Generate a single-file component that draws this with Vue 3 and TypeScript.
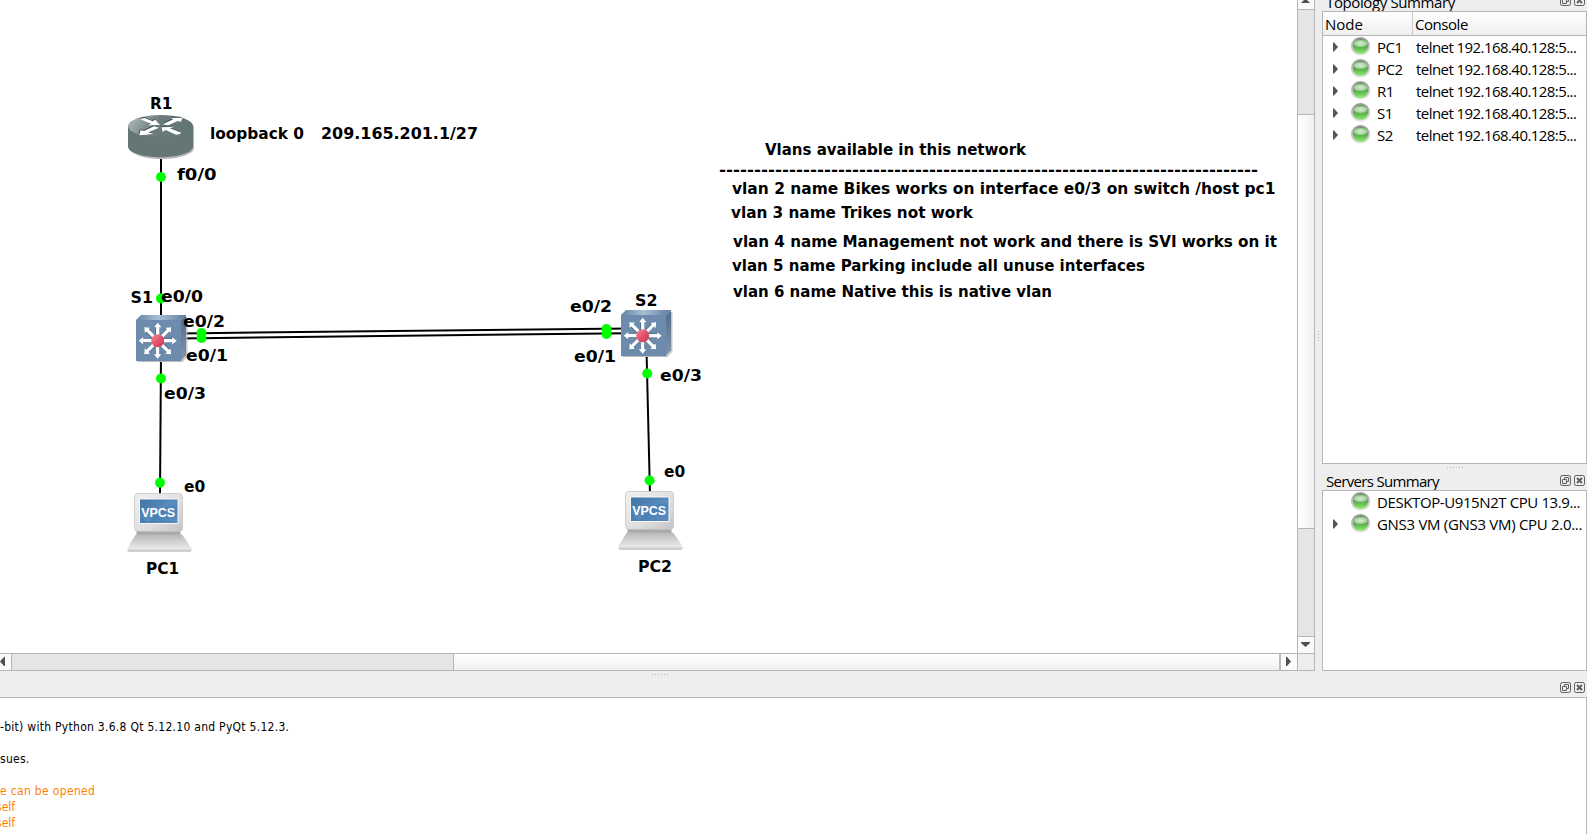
<script setup lang="ts">
interface Label { text: string; x: number; y: number; w: number }
interface Point { x: number; y: number }

const labels: Label[] = [
  { text: 'R1', x: 150, y: 108.6, w: 22.5 },
  { text: 'loopback 0', x: 210, y: 138.6, w: 94 },
  { text: '209.165.201.1/27', x: 321, y: 138.6, w: 157 },
  { text: 'f0/0', x: 177, y: 179.6, w: 39.5 },
  { text: 'S1', x: 130.5, y: 303.4, w: 22.5 },
  { text: 'e0/0', x: 161, y: 301.8, w: 42 },
  { text: 'e0/2', x: 183, y: 326.6, w: 42 },
  { text: 'e0/1', x: 186, y: 360.8, w: 42 },
  { text: 'e0/3', x: 164, y: 398.6, w: 42 },
  { text: 'e0/2', x: 570, y: 311.8, w: 42 },
  { text: 'S2', x: 635, y: 305.6, w: 22.5 },
  { text: 'e0/1', x: 574, y: 361.8, w: 42 },
  { text: 'e0/3', x: 660, y: 380.6, w: 42 },
  { text: 'e0', x: 184, y: 491.6, w: 21.2 },
  { text: 'e0', x: 664, y: 476.6, w: 21.2 },
  { text: 'PC1', x: 146, y: 573.6, w: 33 },
  { text: 'PC2', x: 638, y: 571.6, w: 34 },
  { text: 'Vlans available in this network', x: 765, y: 154.5, w: 261 },
  { text: '-'.repeat(77), x: 719, y: 174.5, w: 539 },
  { text: 'vlan 2 name Bikes works on interface e0/3 on switch /host pc1', x: 732, y: 193.6, w: 543.5 },
  { text: 'vlan 3 name Trikes not work', x: 731, y: 217.6, w: 242 },
  { text: 'vlan 4 name Management not work and there is SVI works on it', x: 733, y: 246.6, w: 544 },
  { text: 'vlan 5 name Parking include all unuse interfaces', x: 732, y: 270.6, w: 413 },
  { text: 'vlan 6 name Native this is native vlan', x: 733, y: 296.6, w: 319 },
]

const ports: Point[] = [
  { x: 161, y: 177 }, { x: 161, y: 298.5 }, { x: 161, y: 378.5 }, { x: 160, y: 482.8 },
  { x: 201.5, y: 333 }, { x: 201.5, y: 338 }, { x: 606.5, y: 329 }, { x: 606.5, y: 334 },
  { x: 647.2, y: 373.5 }, { x: 649.6, y: 480.5 },
]

const switches: Point[] = [{ x: 136, y: 315 }, { x: 621, y: 310 }]
const hosts: Point[] = [{ x: 127, y: 493 }, { x: 618, y: 491 }]
const spokes = [
  { a: 0, l: 19 }, { a: 45, l: 19 }, { a: 90, l: 18 }, { a: 135, l: 19 },
  { a: 180, l: 19 }, { a: 225, l: 19 }, { a: 270, l: 18 }, { a: 315, l: 19 },
]

const nodes = ['PC1', 'PC2', 'R1', 'S1', 'S2']
const servers = [
  { text: 'DESKTOP-U915N2T CPU 13.9...', open: false, cls: 'desk' },
  { text: 'GNS3 VM (GNS3 VM) CPU 2.0...', open: true, cls: 'vm' },
]
</script>

<template>
  <div class="app">
    <div class="upper">
      <div class="view">
        <svg class="scene" width="1297" height="653" viewBox="0 0 1297 653">
          <defs>
            <linearGradient id="rt" x1="0" y1="0" x2="1" y2="0.2">
              <stop offset="0" stop-color="#b4bebe" /><stop offset=".5" stop-color="#6c7c7c" /><stop offset="1" stop-color="#627474" />
            </linearGradient>
            <linearGradient id="st" x1="0" y1="0" x2="1" y2="0">
              <stop offset="0" stop-color="#6583a5" /><stop offset=".45" stop-color="#a9bed6" /><stop offset="1" stop-color="#5f7c9f" />
            </linearGradient>
            <linearGradient id="ss" x1="0" y1="0" x2="0" y2="1">
              <stop offset="0" stop-color="#516b8a" /><stop offset="1" stop-color="#8496ab" />
            </linearGradient>
            <linearGradient id="red" x1="0" y1="0" x2="1" y2="1">
              <stop offset="0" stop-color="#f58a97" /><stop offset=".6" stop-color="#e04a64" /><stop offset="1" stop-color="#c83852" />
            </linearGradient>
            <linearGradient id="case" x1="0" y1="0" x2="1" y2="1">
              <stop offset="0" stop-color="#f0f0f0" /><stop offset=".6" stop-color="#dedede" /><stop offset="1" stop-color="#c4c4c4" />
            </linearGradient>
            <linearGradient id="base" x1="0" y1="0" x2="0" y2="1">
              <stop offset="0" stop-color="#b8b8b8" /><stop offset=".8" stop-color="#e8e8e8" /><stop offset="1" stop-color="#bdbdbd" />
            </linearGradient>
            <linearGradient id="blue" x1="0" y1="0" x2="1" y2="1">
              <stop offset="0" stop-color="#2f689f" /><stop offset=".5" stop-color="#4a80b5" /><stop offset="1" stop-color="#5b8dbe" />
            </linearGradient>
            <g id="routes">
              <path d="M90 102L104 99L128 109L136 104L150 120L114 121L122 116z" />
              <path d="M158 118L190 103L182 99L217 98L213 110L203 108L175 121z" />
              <path d="M147 128L115 142L131 147L88 151L92 135L102 138L132 124z" />
              <path d="M208 148L214 143L180 130L192 125L154 127L158 141L167 135L198 149z" />
            </g>
          </defs>
          <g class="wires">
            <path d="M161 150V320" /><path d="M161 355L160 495" />
            <path d="M180 333.400L630 328.400" /><path d="M180 338.400L630 333.200" />
            <path d="M646.500 350L650 495" />
          </g>
          <g>
            <path d="M129.500 126v22c0 6 14.500 11 32 11s32.500-5 32.500-11v-22z" fill="#b9b5bc" />
            <path d="M128 126v20.500c0 6 14.500 10.700 32.500 10.700s32.500-4.700 32.500-10.700v-20.500z" fill="#657676" />
            <ellipse cx="160.500" cy="126" rx="32.500" ry="11" fill="url(#rt)" />
            <g transform="translate(110 85) scale(.33333)">
              <use href="#routes" fill="#445656" transform="translate(-2 -3)" />
              <use href="#routes" fill="#fff" />
            </g>
          </g>
          <g v-for="s in switches" :key="s.x" :transform="`translate(${s.x} ${s.y})`">
            <path d="M1.500 46.300H46l4.800-5V2" fill="none" stroke="#bbb8be" stroke-width="1.200" />
            <path d="M0 5L5 0H50L45 5z" fill="url(#st)" />
            <path d="M45 5L50 0V40.500L45 46z" fill="url(#ss)" />
            <rect y="5" width="45" height="41" fill="#6d8bac" />
            <g transform="translate(21.700 25.700)">
              <g v-for="k in spokes" :key="k.a" :transform="`rotate(${k.a})`">
                <path :d="`M4 -1.600H${k.l - 4.500}V-3.800L${k.l} 0L${k.l - 4.500} 3.800V1.600H4z`" fill="#4d6884" transform="translate(-.5 -.8)" />
                <path :d="`M4 -1.600H${k.l - 4.500}V-3.800L${k.l} 0L${k.l - 4.500} 3.800V1.600H4z`" fill="#fff" />
              </g>
              <circle r="6.500" fill="url(#red)" />
            </g>
          </g>
          <g v-for="h in hosts" :key="h.x" :transform="`translate(${h.x} ${h.y})`">
            <path d="M9.500 37h44v5h-44z" fill="#a9a9a9" />
            <path d="M9.500 41.500h44.500Q55.500 41.500 56.500 43.500L64.500 55Q65.500 58.800 62.500 58.800H2.500Q-.5 58.800.5 55L7.500 43.500Q8.500 41.500 9.500 41.500z" fill="url(#base)" />
            <rect x="7.500" y=".5" width="48" height="37.800" rx="3.500" fill="url(#case)" stroke="#c7c7c7" stroke-width=".8" />
            <rect x="12.500" y="6" width="38.500" height="24.500" fill="url(#blue)" stroke="#f7f7f7" />
            <path d="M13 6.500H50V12Q30 14 21 30L13 23z" fill="#fff" opacity=".08" />
            <text x="31.200" y="24" class="vpcs" text-anchor="middle" textLength="34" lengthAdjust="spacingAndGlyphs">VPCS</text>
          </g>
          <circle v-for="(p, i) in ports" :key="i" :cx="p.x" :cy="p.y" r="5" fill="#00ff00" />
          <text v-for="(l, i) in labels" :key="i" class="label" :x="l.x" :y="l.y" :textLength="l.w" lengthAdjust="spacingAndGlyphs">{{ l.text }}</text>
        </svg>
        <div class="vbar">
          <div class="vbtn first"><svg width="16" height="9"><path d="M3 3L7.500 -1.500L12 3z" fill="#505050" /></svg></div>
          <div class="groove v1"></div>
          <div class="vhandle"></div>
          <div class="groove v2"></div>
          <div class="vbtn last"><svg width="16" height="16"><path d="M3 5H12V6L7.500 10L3 6z" fill="#505050" /></svg></div>
        </div>
        <div class="hbar">
          <div class="hbtn left"><svg width="11" height="16"><path d="M5 3V12H4L0 7.500L4 3z" fill="#505050" /></svg></div>
          <div class="groove h1"></div>
          <div class="hhandle"></div>
          <div class="hbtn right"><svg width="16" height="16"><path d="M5 3V12H6L10 7.500L6 3z" fill="#505050" /></svg></div>
        </div>
        <div class="corner"></div>
      </div>
      <div class="vsplit"><i v-for="n in 4" :key="n"></i></div>
      <div class="side">
        <div class="title topo">
          <span class="t1">Topology Summary</span>
          <svg class="tools" width="27" height="13" viewBox="0 0 27 13"><use href="#dockIcons" /></svg>
        </div>
        <div class="panel tree">
          <div class="head"><span class="hn">Node</span><span class="hc">Console</span></div>
          <div v-for="n in nodes" :key="n" class="row">
            <svg class="arrow" width="6" height="12"><path d="M0 1.500H1L5 6L1 10.500H0z" fill="#555" /></svg>
            <span class="led"><span></span></span>
            <span class="name">{{ n }}</span>
            <span class="tel">telnet 192.168.40.128:5...</span>
          </div>
        </div>
        <div class="hsplit"><i v-for="n in 6" :key="n"></i></div>
        <div class="title serv">
          <span class="t2">Servers Summary</span>
          <svg class="tools" width="27" height="13" viewBox="0 0 27 13"><use href="#dockIcons" /></svg>
        </div>
        <div class="panel list">
          <div v-for="s in servers" :key="s.text" class="row">
            <svg class="arrow" width="6" height="12"><path v-if="s.open" d="M0 1.500H1L5 6L1 10.500H0z" fill="#555" /></svg>
            <span class="led"><span></span></span>
            <span :class="s.cls">{{ s.text }}</span>
          </div>
        </div>
      </div>
    </div>
    <div class="console-head">
      <div class="dots"><i v-for="n in 6" :key="n"></i></div>
      <svg class="tools" width="27" height="13" viewBox="0 0 27 13">
        <defs>
          <g id="dockIcons" fill="none" stroke="#606060">
            <rect x=".5" y="1.500" width="10" height="10" rx="1.800" />
            <path d="M4.500 5.500V3.500H8.500V7.500H6.500M2.500 5.500H6.500V9.500H2.500z" />
            <rect x="14.500" y="1.500" width="10" height="10" rx="1.800" />
            <path d="M17 4L22 9M22 4L17 9" stroke-width="2" />
          </g>
        </defs>
        <use href="#dockIcons" />
      </svg>
    </div>
    <div class="console">
      <p class="c1">-bit) with Python 3.6.8 Qt 5.12.10 and PyQt 5.12.3.</p>
      <p>&nbsp;</p>
      <p class="c2">sues.</p>
      <p>&nbsp;</p>
      <p class="warn c3">e can be opened</p>
      <p class="warn c4">self</p>
      <p class="warn c4">self</p>
    </div>
  </div>
</template>

<style>
body { margin: 0; overflow: hidden; }
</style>

<style scoped>
.app { width: 1587px; height: 834px; background: #eee; overflow: hidden; display: flex; flex-direction: column; font-family: "Open Sans", "Noto Sans", sans-serif; color: #000; }
.app * { box-sizing: border-box; }
.upper { display: flex; height: 671px; flex: none; }
.view { width: 1315px; display: grid; grid-template-columns: 1297px 18px; grid-template-rows: 653px 18px; background: #fff; flex: none; }
.scene { display: block; }
.wires path { stroke: #000; stroke-width: 2; fill: none; }
.label { font: bold 16px "DejaVu Sans Condensed", "DejaVu Sans", "Noto Sans", sans-serif; font-stretch: condensed; white-space: pre; }
.vpcs { font: bold 12px "Liberation Sans", Arial, sans-serif; fill: #fff; }
.vbar { display: flex; flex-direction: column; border-left: 1px solid #b5b5b5; border-right: 1px solid #b5b5b5; }
.hbar { display: flex; border-top: 1px solid #b5b5b5; border-bottom: 1px solid #b5b5b5; }
.corner { border: 1px solid #b5b5b5; background: #eee; }
.vbtn, .hbtn { background: #fafafa; flex: none; }
.vbtn svg, .hbtn svg { display: block; }
.first { height: 9px; }
.last { height: 16px; }
.left { width: 11px; }
.right { width: 16px; border-left: 0; }
.groove { background: #e5e5e5; flex: none; }
.v1 { height: 106px; border-top: 1px solid #b5b5b5; border-bottom: 1px solid #b5b5b5; }
.v2 { height: 109px; border-top: 1px solid #b5b5b5; border-bottom: 1px solid #b5b5b5; }
.vhandle { flex: 1; background: linear-gradient(90deg, #fff, #f0f0f0); }
.h1 { width: 443px; border-left: 1px solid #b5b5b5; border-right: 1px solid #b5b5b5; }
.hhandle { flex: 1; background: linear-gradient(#fff, #f0f0f0); border-right: 2px solid #bcbcbc; }
.vsplit { width: 7px; display: flex; flex-direction: column; justify-content: center; align-items: center; gap: 2px; }
i { width: 1px; height: 1px; background: #b4b4b4; display: block; }
.side { width: 265px; display: flex; flex-direction: column; }
.title { display: flex; justify-content: space-between; align-items: flex-end; padding-left: 4px; font-size: 15px; line-height: 20px; white-space: nowrap; flex: none; }
.topo { height: 11px; }
.serv { height: 20px; }
.tools { display: block; flex: none; }
.topo .tools { margin-bottom: 4px; }
.serv .tools { margin-bottom: 3px; }
.t1 { letter-spacing: -.38px; margin-bottom: -1px; }
.t2 { letter-spacing: -.68px; margin-bottom: -1px; }
.panel { border: 1px solid #b5b5b5; background: #fff; font-size: 15px; white-space: nowrap; }
.tree { height: 453px; flex: none; }
.list { flex: 1; }
.head { height: 24px; border-bottom: 1px solid #b5b5b5; display: flex; background: linear-gradient(#fff, #efefef); line-height: 24px; }
.hn { width: 90px; padding-left: 2px; border-right: 1px solid #c8c8c8; }
.hc { padding-left: 2px; letter-spacing: -.45px; }
.row { display: flex; align-items: center; height: 22px; line-height: 22px; }
.arrow { margin-left: 10px; flex: none; }
.led { width: 19px; height: 19px; margin: 0 7px 0 12px; border-radius: 50%; background: linear-gradient(#969696, #bdbdbd 50%, #eee); flex: none; display: flex; align-items: center; justify-content: center; position: relative; top: -1px; }
.led span { width: 15px; height: 15px; border-radius: 50%; background: radial-gradient(ellipse 8px 4px at 50% 30%, #d4ecd0 0, #a9d5a0 70%, transparent 100%), linear-gradient(#4f9a45, #57aa49 50%, #8bee70); }
.name { width: 39px; letter-spacing: -.5px; }
.tel { letter-spacing: -.56px; }
.desk { letter-spacing: -.4px; }
.vm { letter-spacing: -.3px; }
.hsplit { height: 6px; display: flex; justify-content: center; align-items: center; gap: 2px; }
.console-head { height: 26px; flex: none; display: flex; justify-content: flex-end; align-items: flex-end; }
.console-head .tools { margin-bottom: 3px; }
.dots { display: flex; gap: 2px; align-self: flex-start; margin: 3px 892px 0 0; }
.console { border-top: 1px solid #b5b5b5; border-right: 1px solid #b5b5b5; background: #fff; flex: 1; padding-top: 21px; font: 12px/16px "DejaVu Sans Condensed", "DejaVu Sans", sans-serif; font-stretch: condensed; white-space: nowrap; }
.console p { margin: 0; height: 16px; letter-spacing: .28px; }
.console .warn { color: #ff7f00; letter-spacing: .33px; }
.console .c4 { margin-left: -4px; letter-spacing: 0; }
</style>
